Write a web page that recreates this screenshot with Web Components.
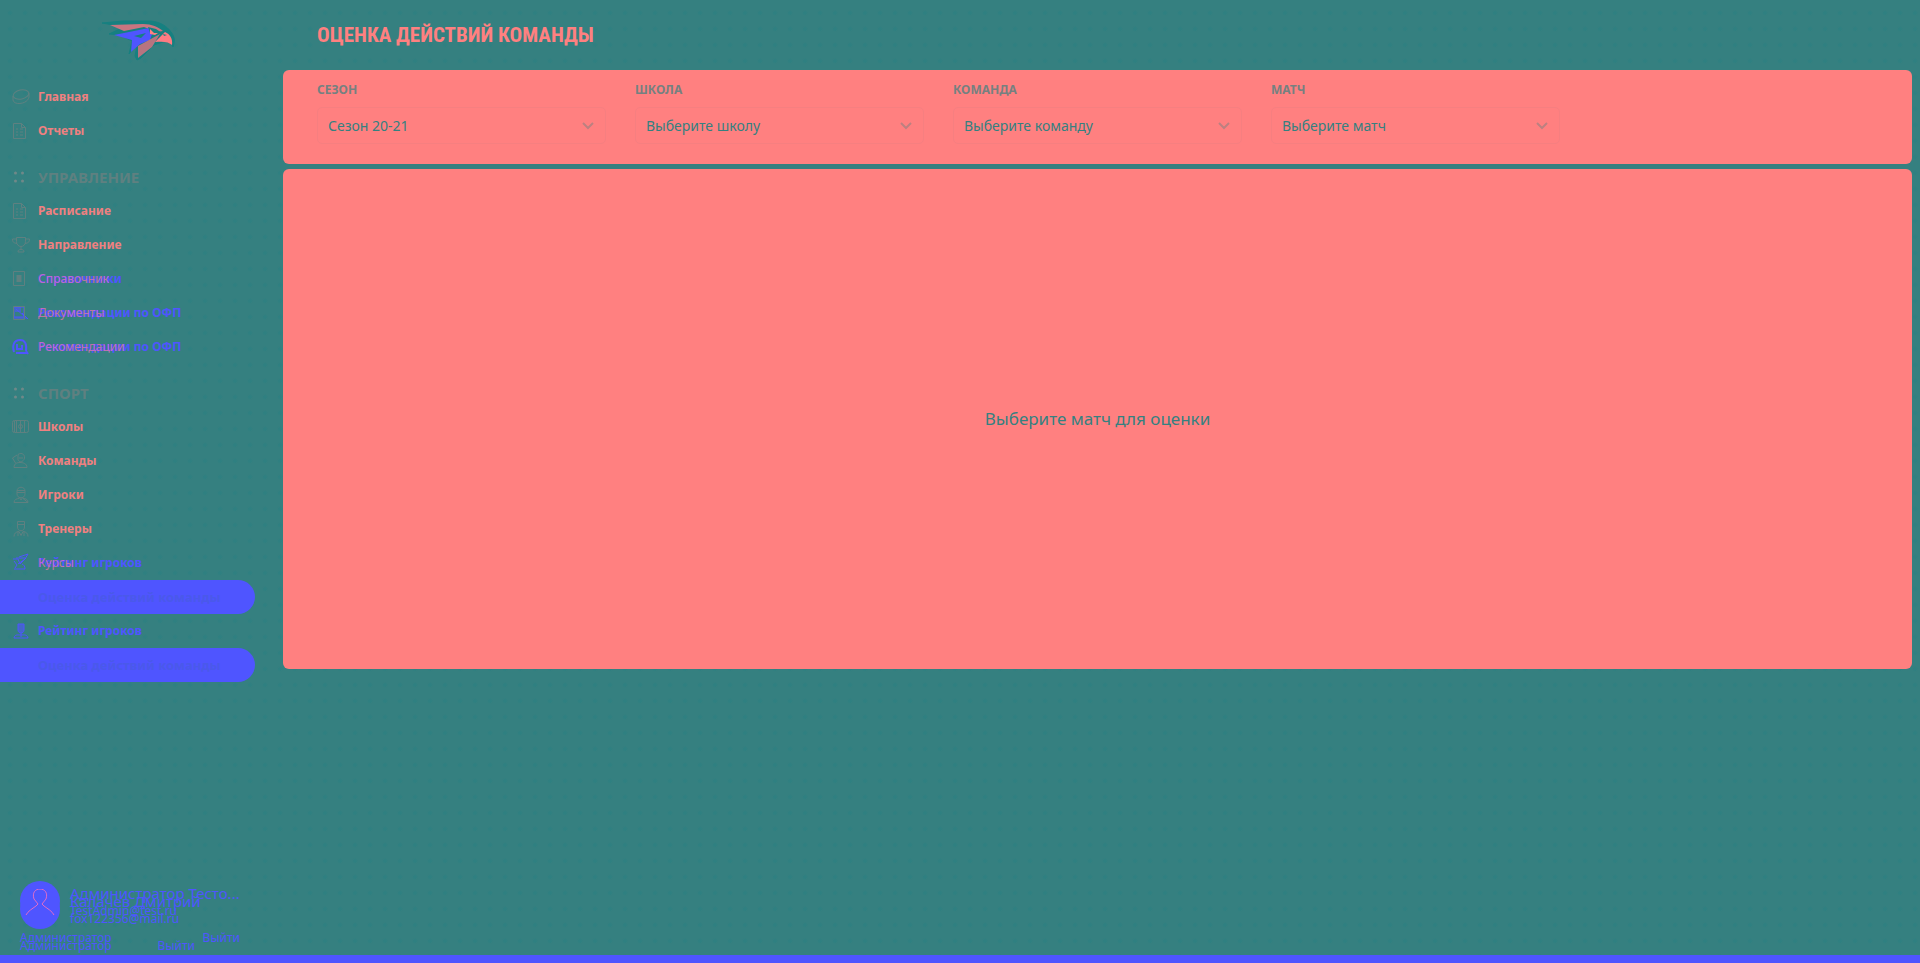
<!DOCTYPE html>
<html lang="ru">
<head>
<meta charset="utf-8">
<title>Оценка действий команды</title>
<style>
body{margin:0;background:#358080;color:#ff8080;font-family:"Noto Sans","Open Sans",sans-serif;
--teal:#358080;--pink:#ff8080;--blue:#4f55ff;--muted:#5f8080}
</style>
</head>
<body>
<app-shell>
  <side-logo slot="side"></side-logo>
  <nav-list slot="side">
    <nav-item icon="puck">Главная</nav-item>
    <nav-item icon="doc">Отчеты</nav-item>
    <nav-heading>Управление</nav-heading>
    <nav-item icon="doc">Расписание</nav-item>
    <nav-item icon="cup">Направление</nav-item>
    <nav-item icon="book" over="Справочник">Справочники</nav-item>
    <nav-item icon="bookblue" over="Документы">Рекомендации по ОФП</nav-item>
    <nav-item icon="head" over="Рекомендации">Рекомендации по ОФП</nav-item>
    <nav-heading>Спорт</nav-heading>
    <nav-item icon="rink">Школы</nav-item>
    <nav-item icon="team">Команды</nav-item>
    <nav-item icon="player">Игроки</nav-item>
    <nav-item icon="coach">Тренеры</nav-item>
    <nav-item icon="rating" over="Курсы">Рейтинг игроков</nav-item>
    <nav-item icon="none" active>Оценка действий команды</nav-item>
    <nav-item icon="playerblue" tone="blue">Рейтинг игроков</nav-item>
    <nav-item icon="none" active>Оценка действий команды</nav-item>
  </nav-list>
  <user-stack slot="side">
    <user-card name="Администратор Тесто..." mail="TestAdmin@test.ru"></user-card>
    <user-card class="second" name="Калачев Дмитрий" mail="fox122356@mail.ru"></user-card>
  </user-stack>
  <page-title>Оценка действий команды</page-title>
  <filter-panel>
    <filter-field label="Сезон" value="Сезон 20-21"></filter-field>
    <filter-field label="Школа" value="Выберите школу"></filter-field>
    <filter-field label="Команда" value="Выберите команду"></filter-field>
    <filter-field label="Матч" value="Выберите матч"></filter-field>
  </filter-panel>
  <empty-panel>Выберите матч для оценки</empty-panel>
</app-shell>
<script>
const define = (name, html, setup) => customElements.define(name, class extends HTMLElement {
  connectedCallback() {
    if (this.shadowRoot) return;
    const root = this.attachShadow({mode: 'open'});
    root.innerHTML = html;
    if (setup) setup(this, root);
  }
});
const paths = {
  puck: '<ellipse cx="10" cy="7.500" rx="8" ry="4.500" transform="rotate(-12 10 7.500)"/><path d="M2 9v4c1 6 15 4 16-3V6"/>',
  doc: '<path d="M2.500 2.500h8l4 4v11h-12zM10.500 2.500v4h4M5 8h2M9 8h3M5 11h2M9 11h3M5 14h2M9 14h3"/>',
  cup: '<path d="M5.500 2.500h9v4c0 3-2 5-4.500 5s-4.500-2-4.500-5zM5.500 4h-4c0 3 1 4 4.500 4.500M14.500 4h4c0 3-1 4-4.500 4.500M10 11.500v3M7 17c0-2 1-2.500 3-2.500s3 .5 3 2.500z"/>',
  book: '<path d="M2.500 2.500h11v14h-11z"/><path class="f" d="M5.500 6h5v7h-5z"/>',
  bookblue: '<g class="b"><path d="M3 4h10v10H3zM11 10l6 6M5 6l8 7M2 15h14"/><path class="f" d="M4 4h6v5H4z" opacity=".6"/></g><path d="M2.500 3.500h11v13h-11z"/>',
  head: '<g class="b" stroke-width="2"><path d="M3 15c-2-7 0-12 6-12 5 0 7 4 6 11M5 16h11M6 7v5h5V8M15 14l2 3"/></g>',
  rink: '<rect x="1.500" y="3.500" width="16" height="12" rx="2"/><path d="M5.500 4v11M13.500 4v11M9.500 4v11M3.500 4v11"/><circle cx="9.500" cy="9.500" r="2"/>',
  team: '<path d="M7 3.500c4-3 8 1 6 5-2 3-5 3-6 0zM6 4L1.500 7l3 5M3 16.500c0-4 3-5 6-5s7 1 7 5zM8 7h4"/>',
  player: '<path d="M6 6c0-5 8-5 8 0v3c0 5-8 5-8 0zM6 5.500h8M6 7.500h8M8 12l2 3 2-3M3 17.500c0-3 3-4 5-4M12 13.500c3 0 5 1 5 4zM3 17.500h14"/>',
  coach: '<path d="M6.500 4V2.500h7V8c0 5-7 5-7 0zM6 5.500h8M3 17.500c0-3 2-5 5-5l2 4 2-4c3 0 5 2 5 5M7 13v4M13 13v4"/>',
  rating: '<g class="b"><path d="M2 6h5l2 5 6-6M3 16h11M3 8l3 4-2 3M8 4l9-3-3 5-7 5M11 11c2 1 3 2 3 5M5 5h9"/></g>',
  playerblue: '<g class="b"><path class="f" opacity=".6" d="M7 3h6v6c0 4-6 4-6 0z"/><path d="M7 3h6v6c0 4-6 4-6 0zM10 12v4M3 17c1-4 4-3 7-3s6-1 7 3z"/></g>',
  none: ''
};

define('app-shell', `<style>
:host{display:grid;grid-template-columns:283px 1fr;grid-template-rows:1fr 8px;min-height:100vh;box-sizing:border-box;
background:radial-gradient(circle at 10px 13px,#2f8081 1px,transparent 3px) 0 0/15px 16px,#358080}
aside{display:flex;flex-direction:column}
main{display:flex;flex-direction:column;padding-right:8px;min-width:0}
footer{grid-column:1/-1;background:var(--blue)}
</style><aside><slot name="side"></slot></aside><main><slot></slot></main><footer></footer>`);

define('side-logo', `<style>
:host{display:flex;justify-content:center;padding:15px 8px 0 0;height:80px;box-sizing:border-box}
svg{width:76px;height:48px}
</style><svg viewBox="0 0 76 48" role="img" aria-label="Логотип">
<path fill="#168080" stroke="#168080" stroke-linejoin="round" d="M2 8l21-2 28 0c9 1 16 5 20 11 4 5 4 9 2 15-1-3-3-5-7-6l-12 4-13 13-4 2-2-4 2-11-8 9 3-13-12-6-11-1 15-7z"/>
<path fill="#c87580" d="M10 10l33-1c9 0 15 3 20 7l-6 1-13-5-20 4z"/>
<path fill="#4f55ff" d="M14 20l35-7 4 3-3 9-10 4-9 8 1-12z"/>
<path fill="#168080" d="M34 21l12-3-5 5z"/>
<path fill="#b77480" d="M38 31l22-12-8 13-14 11z"/>
<path fill="#ff7b82" d="M55 27l10-10c5 2 8 7 7 13-3-3-8-4-17-3z"/>
<path fill="#168080" d="M48 12l8 2 6 4-6 2-6-2z"/>
<path fill="#ff8080" d="M50 14l4 4 4 0-3 2-5-1z"/>
<path fill="#168080" d="M63 19l4 1-3 1z"/></svg>`);

define('nav-list', `<style>:host{display:block}nav{display:flex;flex-direction:column}</style><nav aria-label="Меню"><slot></slot></nav>`);

define('nav-heading', `<style>
:host{display:flex;align-items:center;height:34px;margin-top:12px;padding-left:12px;color:var(--muted)}
svg{width:26px;height:14px;fill:#708888}
h2{margin:0;font-size:15px;line-height:20px;font-weight:700;text-transform:uppercase}
</style><svg viewBox="0 0 26 14" aria-hidden="true"><circle cx="3.500" cy="3" r="1.500"/><circle cx="10.500" cy="3" r="1.500"/><circle cx="3.500" cy="11" r="1.500"/><circle cx="10.500" cy="11" r="1.500"/></svg><h2><slot></slot></h2>`);

define('nav-item', `<style>
:host{display:block;height:34px}
a{display:flex;align-items:center;height:34px;width:255px;box-sizing:border-box;padding-left:11px;color:#f08080;
text-decoration:none;font-size:12px;line-height:20px;font-weight:700}
svg{width:20px;height:20px;margin-right:7px;fill:none;stroke:#5f8080;stroke-width:1;flex:none}
.f{fill:#5f8080;stroke:none}.b{stroke:var(--blue)}.b .f{fill:var(--blue)}
.label{display:grid;white-space:nowrap}
.label>span{grid-area:1/1}
:host([tone=blue]) a,:host([over]) .base{color:var(--blue)}
.over{font-weight:400;color:#f078a8;opacity:.7}
:host([active]) a{background:var(--blue);color:#4a59ea;border-radius:0 17px 17px 0;font-size:13px}
</style><a href="#"><svg viewBox="0 0 20 20" aria-hidden="true"></svg><span class="label"><span class="base"><slot></slot></span></span></a>`, (el, root) => {
  root.querySelector('svg').innerHTML = paths[el.getAttribute('icon')];
  if (el.hasAttribute('active')) root.querySelector('a').setAttribute('aria-current', 'page');
  if (el.hasAttribute('over')) {
    const s = document.createElement('span');
    s.className = 'over';
    s.textContent = el.getAttribute('over');
    root.querySelector('.label').append(s);
  }
});

define('user-stack', `<style>
:host{display:grid;margin-top:auto;padding:0 43px 0 20px}
::slotted(*){grid-area:1/1}
::slotted(.second){padding-top:8px}
</style><slot></slot>`);

define('user-card', `<style>
:host{display:block;color:var(--blue);min-width:0;padding-bottom:9px}
:host(.second){padding-bottom:1px}
:host(.second) .foot{padding-right:45px}
.who{display:flex;gap:10px;align-items:center}
svg{width:40px;height:40px;flex:none}
.txt div{white-space:nowrap}
.name{font-size:15px;line-height:20px}
.mail{font-size:12px;line-height:16px}
.foot{display:flex;justify-content:space-between;font-size:12px;line-height:16px;margin-top:9px}
button{all:unset;cursor:pointer}
</style><div class="who"><svg viewBox="0 0 40 40" aria-hidden="true"><circle cx="20" cy="20" r="20" fill="#4f55ff"/></svg>
<div class="txt"><div class="name"></div><div class="mail"></div></div></div>
<div class="foot"><span>Администратор</span><button type="button">Выйти</button></div>`, (el, root) => {
  root.querySelector('.name').textContent = el.getAttribute('name');
  root.querySelector('.mail').textContent = el.getAttribute('mail');
  if (el.classList.contains('second')) root.querySelector('svg').insertAdjacentHTML('beforeend',
    '<path d="M6 26c2-4 6-6 10-9l2-2-4-5c-2-6 1-10 6-10s8 4 6 10l-4 5 2 2c4 3 8 5 10 9" fill="none" stroke="#e06cc8" stroke-width="1"/>');
});

define('page-title', `<style>
:host{display:flex;align-items:center;height:70px;padding-left:34px}
h1{margin:0;font:700 21px/32px "Roboto Condensed","Liberation Sans Narrow",Roboto,sans-serif;text-transform:uppercase;white-space:nowrap}
</style><h1><slot></slot></h1>`);

define('filter-panel', `<style>
:host{display:block;background:var(--pink);border-radius:6px}
form{display:grid;grid-template-columns:repeat(5,1fr);gap:29px;padding:11px 34px 20px}
</style><form><slot></slot></form>`);

define('filter-field', `<style>
:host{display:block;min-width:0}
label{display:block;font-size:12px;line-height:18px;font-weight:700;text-transform:uppercase;color:#758080;margin-bottom:8px}
.box{display:grid;align-items:center}
select{grid-area:1/1;appearance:none;width:100%;height:37px;box-sizing:border-box;border:1px solid #f67f80;border-radius:5px;background:transparent;
padding:0 34px 0 10px;color:var(--teal);font:400 14px/20px "Noto Sans",sans-serif}
svg{grid-area:1/1;justify-self:end;margin-right:12px;width:12px;height:8px;fill:none;stroke:#bc8080;stroke-width:2;pointer-events:none}
</style><label for="s"></label><div class="box"><select id="s"><option></option></select><svg viewBox="0 0 12 8" aria-hidden="true"><path d="M1 1l5 5 5-5"/></svg></div>`, (el, root) => {
  root.querySelector('label').textContent = el.getAttribute('label');
  root.querySelector('option').textContent = el.getAttribute('value');
});

define('empty-panel', `<style>
:host{display:flex;align-items:center;justify-content:center;min-height:500px;margin-top:5px;background:var(--pink);border-radius:6px;color:var(--teal)}
p{margin:0;font-size:17px;line-height:24px}
</style><p><slot></slot></p>`);
</script>
</body>
</html>
